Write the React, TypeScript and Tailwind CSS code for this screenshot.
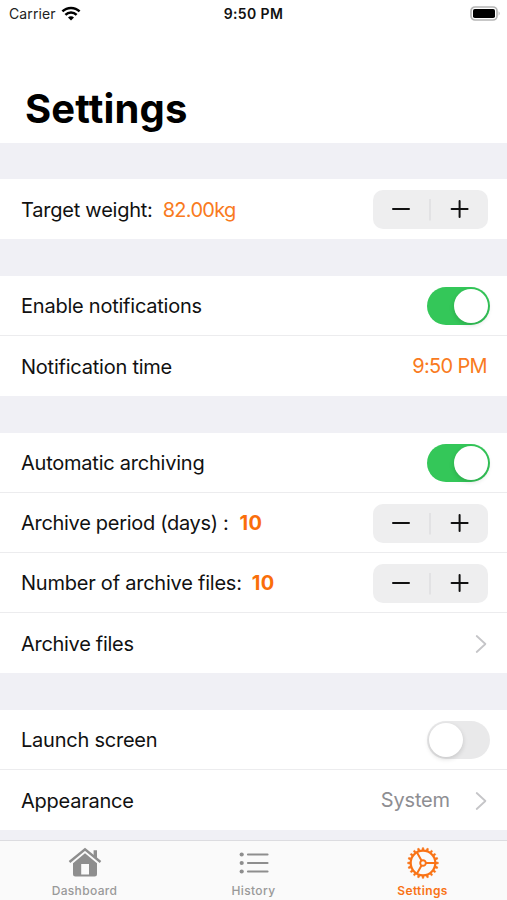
import type { ReactNode } from "react";

function Wifi() {
  return (
    <svg width="20" height="16" viewBox="0 0 20 16" className="ml-[5px]">
      <g fill="none" stroke="#000" strokeWidth="2.5">
        <path d="M1.4 5.4 A12.4 12.4 0 0 1 18.6 5.4" />
        <path d="M4.4 8.9 A8 8 0 0 1 15.6 8.9" />
      </g>
      <path d="M10 14.6 L7 11.5 A4.2 4.2 0 0 1 13 11.5 Z" fill="#000" />
    </svg>
  );
}

function Stepper() {
  return (
    <div className="mr-[19px] mt-[1px] flex h-[39px] w-[115px] items-center rounded-[10px] bg-[#eeeeef]">
      <svg width="115" height="39" viewBox="0 0 115 39">
        <path d="M20 19 H36 M78.6 19 H94.6 M86.6 11 V27" stroke="#111" strokeWidth="2" strokeLinecap="round" />
        <path d="M57 9 V30.5" stroke="#dfdfe1" strokeWidth="1.6" />
      </svg>
    </div>
  );
}

function Toggle({ on }: { on: boolean }) {
  return (
    <div
      className={
        on
          ? "mr-[17px] flex h-[38px] w-[63px] items-center justify-end rounded-full bg-[#34c759] px-[2px]"
          : "mr-[17px] flex h-[38px] w-[63px] items-center rounded-full bg-[#e9e9ea] px-[2px]"
      }
    >
      <div className="h-[34px] w-[34px] rounded-full bg-white shadow-[0_2px_5px_rgba(0,0,0,0.15)]" />
    </div>
  );
}

function Chevron() {
  return (
    <svg width="12" height="20" viewBox="0 0 12 20" className="mr-[20px] mt-[1px]">
      <path d="M1.7 2 L10.4 10 L1.7 18" fill="none" stroke="#c5c5c8" strokeWidth="1.8" strokeLinecap="round" strokeLinejoin="round" />
    </svg>
  );
}

function Row({ label, value, last, children }: { label: ReactNode; value?: ReactNode; last?: boolean; children: ReactNode }) {
  return (
    <div
      className={
        last
          ? "flex h-[60px] items-center justify-between pl-[21px]"
          : "flex h-[60px] items-center justify-between border-b border-[#ececee] pl-[21px]"
      }
    >
      <div className="flex items-center whitespace-pre pt-[1px] text-[20px] leading-[28px] tracking-[-0.23px]">
        {label}
        {value}
      </div>
      {children}
    </div>
  );
}

function Gear() {
  const teeth = Array.from({ length: 20 }, (_, i) => i * 18);
  return (
    <svg width="32" height="32" viewBox="-16 -16 32 32" stroke="#f97316" fill="none">
      <circle r="12.3" strokeWidth="2.2" />
      <circle r="2.8" strokeWidth="1.9" />
      <path d="M3 0 H12 M-1.5 -2.6 L-6 -10.4 M-1.5 2.6 L-6 10.4" strokeWidth="2" />
      {teeth.map((a) => (
        <path key={a} d="M-1 -13 L-.7 -15.3 H.7 L1 -13 Z" transform={`rotate(${a})`} fill="#f97316" strokeWidth=".6" />
      ))}
    </svg>
  );
}

export default function App() {
  return (
    <div className="flex h-[900px] w-[507px] flex-col overflow-hidden bg-[#f0f0f5] font-['Inter',sans-serif] text-[#111]">
      <header className="h-[143px] shrink-0 bg-white">
        <div className="grid h-[27px] grid-cols-3 items-center text-[14px]">
          <div className="flex items-center pl-[9px]">
            <span className="tracking-[0.1px] text-[#222]">Carrier</span>
            <Wifi />
          </div>
          <span className="text-center text-[14px] font-semibold tracking-[0.4px]">9:50 PM</span>
          <svg width="32" height="16" viewBox="0 0 32 16" className="mr-[6px] justify-self-end">
            <rect x="2" y="1" width="26" height="13" rx="4" fill="#fff" stroke="#b5b5b5" strokeWidth="1.7" />
            <rect x="4" y="2.9" width="22" height="9.2" rx="1.8" fill="#000" />
            <path d="M29.6 5.3 Q31.8 7.5 29.6 9.7 Z" fill="#b5b5b5" />
          </svg>
        </div>
        <h1 className="pl-[25px] pt-[56px] text-[40px] font-bold leading-[52px] tracking-[0.15px] text-black">Settings</h1>
      </header>

      <section className="mt-[36px] shrink-0 bg-white">
        <Row label={<span>Target weight:</span>} value={<span className="ml-[10px] tracking-[-0.7px] text-[#f97a20]">82.00kg</span>} last>
          <Stepper />
        </Row>
      </section>

      <section className="mt-[37px] shrink-0 bg-white">
        <Row label={<span>Enable notifications</span>}>
          <Toggle on />
        </Row>
        <Row label={<span>Notification time</span>} last>
          <span className="mr-[20px] text-[20px] tracking-[-0.65px] text-[#f97a20]">9:50 PM</span>
        </Row>
      </section>

      <section className="mt-[37px] shrink-0 bg-white">
        <Row label={<span>Automatic archiving</span>}>
          <Toggle on />
        </Row>
        <Row label={<span className="tracking-[-0.3px]">Archive period (days) :</span>} value={<span className="ml-[11px] font-bold tracking-[0.3px] text-[#fa6e0a]">10</span>}>
          <Stepper />
        </Row>
        <Row label={<span>Number of archive files:</span>} value={<span className="ml-[10px] font-bold tracking-[0.3px] text-[#fa6e0a]">10</span>}>
          <Stepper />
        </Row>
        <Row label={<span className="tracking-[-0.3px]">Archive files</span>} last>
          <Chevron />
        </Row>
      </section>

      <section className="mt-[37px] shrink-0 bg-white">
        <Row label={<span>Launch screen</span>}>
          <Toggle on={false} />
        </Row>
        <Row label={<span>Appearance</span>} last>
          <div className="flex items-center">
            <span className="mr-[25px] text-[20px] tracking-[-0.15px] text-[#8e8e92]">System</span>
            <Chevron />
          </div>
        </Row>
      </section>

      <nav className="mt-[10px] grid h-[60px] shrink-0 grid-cols-3 border-t border-[#dcdce0] bg-[#fafafa] text-[12px] font-medium tracking-[0.35px] text-[#999]">
        <div className="flex flex-col items-center pt-[6px]">
          <svg width="34" height="32" viewBox="0 0 34 32">
            <path d="M1.5 15 L17 2.2 L32.5 15" fill="none" stroke="#8e8e8e" strokeWidth="2.4" />
            <path d="M25.6 3.3 H29 V11.5 L25.6 8.7 Z" fill="#8e8e8e" />
            <path fillRule="evenodd" d="M17 6.2 L29 16.2 V27 Q29 29.5 26.5 29.5 H7.5 Q5 29.5 5 27 V16.2 Z M13.2 17 V27.6 H21 V17 Z" fill="#8e8e8e" />
          </svg>
          <span className="mt-[3px] leading-[18px]">Dashboard</span>
        </div>
        <div className="flex flex-col items-center pt-[6px]">
          <svg width="32" height="32" viewBox="0 0 32 32" stroke="#8e8e8e" fill="#8e8e8e" strokeLinecap="round">
            <path d="M10 7.5 H29.5 M10 16 H29.5 M10 24.5 H29.5" strokeWidth="2.2" />
            <g stroke="none">
              <circle cx="3.7" cy="7.5" r="2.1" />
              <circle cx="3.7" cy="16" r="2.1" />
              <circle cx="3.7" cy="24.5" r="2.1" />
            </g>
          </svg>
          <span className="mt-[3px] leading-[18px]">History</span>
        </div>
        <div className="flex flex-col items-center pt-[6px] font-semibold text-[#f97316]">
          <Gear />
          <span className="mt-[3px] leading-[18px]">Settings</span>
        </div>
      </nav>
    </div>
  );
}
